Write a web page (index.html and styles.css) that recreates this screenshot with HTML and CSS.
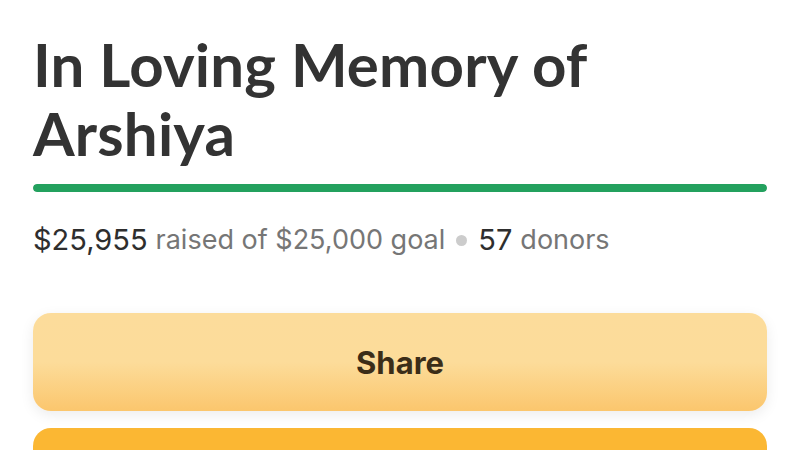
FILE: index.html
```html
<!DOCTYPE html>
<html lang="en">
<head>
    <meta charset="UTF-8">
    <meta name="viewport" content="width=device-width, initial-scale=1.0">
    <title>In Loving Memory of Arshiya</title>
    <link rel="stylesheet" href="styles.css">
</head>
<body>
    <div class="container">
        <h1>In Loving Memory of Arshiya</h1>
        <div class="progress"><div class="progress-fill" style="width: 100%"></div></div>
        <p class="stats">
            <span class="num">$25,955</span> raised of $25,000 goal
            <span class="dot"></span>
            <span class="num">57</span> donors
        </p>
        <div class="actions">
            <button class="btn btn-share">Share</button>
            <button class="btn btn-donate">Donate now</button>
        </div>
    </div>
</body>
</html>
```

FILE: styles.css
```css
body {
    margin: 0;
    font-family: 'Inter', 'Liberation Sans', sans-serif;
    background-color: #fff;
    color: #333;
}
.container {
    padding: 30px 33px 0 33px;
}
h1 {
    font-family: 'Lato', 'Liberation Sans', sans-serif;
    font-size: 60px;
    font-weight: 700;
    line-height: 69px;
    margin: 0;
    color: #333;
    letter-spacing: 0.2px;
    max-width: 600px;
}
.progress {
    height: 8px;
    border-radius: 4px;
    background-color: #e6e6e6;
    margin-top: 16px;
    overflow: hidden;
}
.progress-fill {
    height: 100%;
    background-color: #23a15e;
    border-radius: 4px;
}
.stats {
    font-size: 27px;
    color: #767676;
    margin: 32px 0 0 0;
    line-height: 32px;
    display: flex;
    align-items: center;
    gap: 8px;
}
.num {
    color: #2e2e2e;
    font-size: 29px;
}
.dot {
    width: 11px;
    height: 11px;
    border-radius: 50%;
    background-color: #ccc;
    margin: 0 3px;
}
.actions {
    display: flex;
    flex-direction: column;
    gap: 17px;
    margin-top: 57px;
}
.btn {
    width: 100%;
    height: 98px;
    border: none;
    border-radius: 18px;
    font-family: inherit;
    font-size: 31px;
    font-weight: 700;
    color: #3b2d18;
    flex-shrink: 0;
}
.btn-share {
    background: linear-gradient(to bottom, #fcdc9b 0%, #fcdc9a 50%, #fbc66d 100%);
    box-shadow: 0 4px 14px rgba(0, 0, 0, 0.08);
}
.btn-donate {
    background-color: #fbb733;
}
```
